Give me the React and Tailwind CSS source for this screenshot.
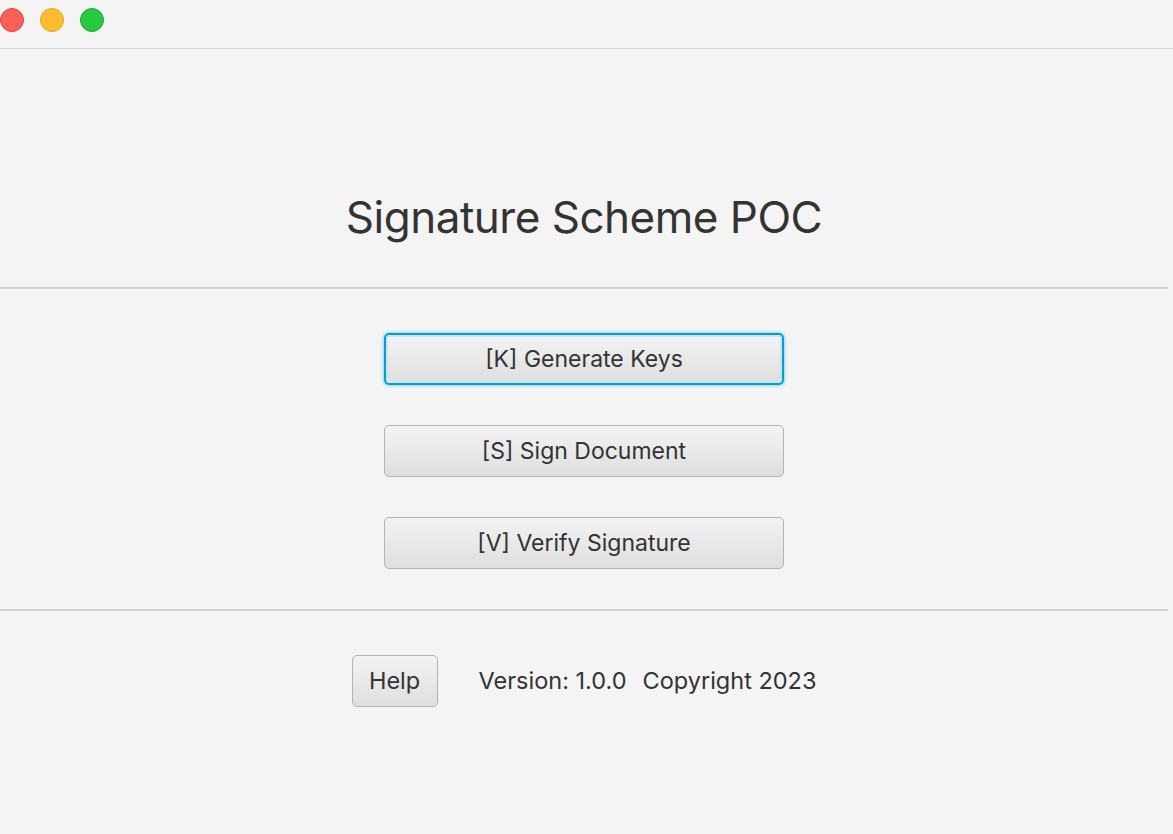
export default function App() {
  const font = { fontFamily: 'Inter, "Noto Sans", sans-serif' };
  const btn =
    "w-[400px] h-[52px] rounded-[5px] bg-gradient-to-b from-[#f3f3f3] to-[#dfdfdf] text-[23px] text-[#333333] flex items-center justify-center";
  return (
    <div className="w-[1173px] h-[834px] bg-[#f4f4f4] flex flex-col overflow-hidden" style={font}>
      <div className="h-[48px] flex items-start pt-[8px] gap-[16px] shrink-0">
        <div className="w-[24px] h-[24px] rounded-full bg-[#fe5f57] border border-[#e0443e]" />
        <div className="w-[24px] h-[24px] rounded-full bg-[#febc2e] border border-[#dea123]" />
        <div className="w-[24px] h-[24px] rounded-full bg-[#28c840] border border-[#1aab29]" />
      </div>
      <div className="h-px bg-[#d4d4d4] shrink-0" />
      <div className="pr-[5px] flex flex-col">
        <div className="h-[238px] flex items-end justify-center pb-[41px]">
          <div className="text-[44px] leading-[58px] text-[#333333] tracking-[-0.5px]">Signature Scheme POC</div>
        </div>
        <div className="h-[2px] bg-[#cfcfcf]" />
        <div className="h-px bg-[#fbfbfb]" />
        <div className="flex flex-col items-center gap-[40px] pt-[43px] pb-[40px]">
          <div className={btn + " border-2 border-[#039ed3] shadow-[inset_0_0_0_2px_#cfe3ee,0_0_3px_1px_#8fd6f1]"}>[K] Generate Keys</div>
          <div className={btn + " border border-[#b3b3b3]"}>[S] Sign Document</div>
          <div className={btn + " border border-[#b3b3b3]"}>[V] Verify Signature</div>
        </div>
        <div className="h-[2px] bg-[#cfcfcf]" />
        <div className="h-px bg-[#fbfbfb]" />
        <div className="flex items-center justify-center pt-[43px] text-[23.5px] text-[#333333]">
          <div className="w-[86px] h-[52px] rounded-[5px] border border-[#b3b3b3] bg-gradient-to-b from-[#f3f3f3] to-[#dfdfdf] flex items-center justify-center">Help</div>
          <div className="ml-[41px]">Version: 1.0.0</div>
          <div className="ml-[16px]">Copyright 2023</div>
        </div>
      </div>
    </div>
  );
}
